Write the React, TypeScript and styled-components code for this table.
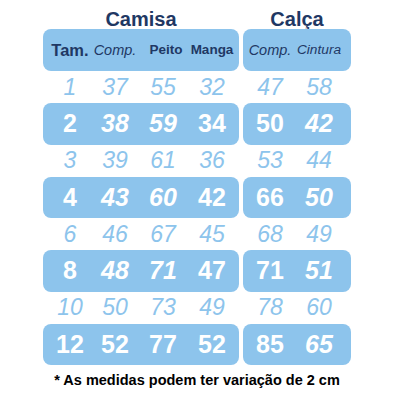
import React from "react";
import styled, { createGlobalStyle } from "styled-components";

const Global = createGlobalStyle`
  html, body { margin: 0; padding: 0; background: #ffffff; }
  body { font-family: "Liberation Sans", Arial, sans-serif; }
`;

const BLUE = "#8dc4ec";
const NAVY = "#1f3864";

const Page = styled.div`
  width: 400px;
  height: 400px;
  box-sizing: border-box;
  padding: 9px 0 0 43px;
  display: flex;
  flex-direction: column;
  align-items: flex-start;
`;

const Tables = styled.div`
  display: flex;
  gap: 4px;
`;

const Group = styled.div`
  display: flex;
  flex-direction: column;
`;

const Title = styled.div`
  height: 20px;
  line-height: 20px;
  text-align: center;
  font-size: 20px;
  font-weight: 700;
  color: ${NAVY};
`;

const Box = styled.div<{ $cols: string; $h: number }>`
  display: grid;
  grid-template-columns: ${(p) => p.$cols};
  padding-right: ${(p) => (p.$cols.split(" ").length === 4 ? 8 : 10)}px;
  height: ${(p) => p.$h}px;
  background: ${BLUE};
  border-radius: 8px;
  align-items: center;
`;

const Plain = styled.div<{ $cols: string }>`
  display: grid;
  grid-template-columns: ${(p) => p.$cols};
  padding-right: ${(p) => (p.$cols.split(" ").length === 4 ? 8 : 10)}px;
  height: 32px;
  align-items: center;
`;

const Cell = styled.div`
  display: flex;
  justify-content: center;
  white-space: nowrap;
`;

const HeadText = styled.span<{ $size: number; $bold?: boolean; $italic?: boolean }>`
  font-size: ${(p) => p.$size}px;
  font-weight: ${(p) => (p.$bold ? 700 : 400)};
  font-style: ${(p) => (p.$italic ? "italic" : "normal")};
  color: ${NAVY};
  line-height: 1;
`;

const LightNum = styled.span`
  font-size: 23px;
  font-style: italic;
  color: ${BLUE};
  line-height: 1;
`;

const BoldNum = styled.span<{ $italic?: boolean }>`
  font-size: 25px;
  font-weight: 700;
  font-style: ${(p) => (p.$italic ? "italic" : "normal")};
  color: #ffffff;
  line-height: 1;
`;

const Note = styled.div`
  width: 308px;
  margin-top: 7px;
  text-align: center;
  font-size: 14.5px;
  line-height: 17px;
  font-weight: 700;
  color: #000000;
  white-space: nowrap;
`;

const CAM_COLS = "54px 36px 60px 38px";
const CAL_COLS = "54px 44px";

type Row = { v: string[]; bold: boolean; it: boolean[] };

const camisa: Row[] = [
  { v: ["1", "37", "55", "32"], bold: false, it: [] },
  { v: ["2", "38", "59", "34"], bold: true, it: [false, true, true, false] },
  { v: ["3", "39", "61", "36"], bold: false, it: [] },
  { v: ["4", "43", "60", "42"], bold: true, it: [false, true, true, false] },
  { v: ["6", "46", "67", "45"], bold: false, it: [] },
  { v: ["8", "48", "71", "47"], bold: true, it: [false, true, true, false] },
  { v: ["10", "50", "73", "49"], bold: false, it: [] },
  { v: ["12", "52", "77", "52"], bold: true, it: [false, false, false, false] },
];

const calca: Row[] = [
  { v: ["47", "58"], bold: false, it: [] },
  { v: ["50", "42"], bold: true, it: [false, true] },
  { v: ["53", "44"], bold: false, it: [] },
  { v: ["66", "50"], bold: true, it: [false, true] },
  { v: ["68", "49"], bold: false, it: [] },
  { v: ["71", "51"], bold: true, it: [false, true] },
  { v: ["78", "60"], bold: false, it: [] },
  { v: ["85", "65"], bold: true, it: [false, true] },
];

function Rows({ rows, cols }: { rows: Row[]; cols: string }) {
  return (
    <>
      {rows.map((r, i) =>
        r.bold ? (
          <Box key={i} $cols={cols} $h={41.5}>
            {r.v.map((n, j) => (
              <Cell key={j}>
                <BoldNum $italic={r.it[j]}>{n}</BoldNum>
              </Cell>
            ))}
          </Box>
        ) : (
          <Plain key={i} $cols={cols}>
            {r.v.map((n, j) => (
              <Cell key={j}>
                <LightNum>{n}</LightNum>
              </Cell>
            ))}
          </Plain>
        )
      )}
    </>
  );
}

export default function App() {
  return (
    <>
      <Global />
      <Page>
        <Tables>
          <Group>
            <Title>Camisa</Title>
            <Box $cols={CAM_COLS} $h={42}>
              <Cell>
                <HeadText $size={16.5} $bold>Tam.</HeadText>
              </Cell>
              <Cell>
                <HeadText $size={14.5} $italic>Comp.</HeadText>
              </Cell>
              <Cell style={{ paddingLeft: 6 }}>
                <HeadText $size={13.5} $bold>Peito</HeadText>
              </Cell>
              <Cell>
                <HeadText $size={13.5} $bold>Manga</HeadText>
              </Cell>
            </Box>
            <Rows rows={camisa} cols={CAM_COLS} />
          </Group>
          <Group>
            <Title>Calça</Title>
            <Box $cols={CAL_COLS} $h={42}>
              <Cell>
                <HeadText $size={14.5} $italic>Comp.</HeadText>
              </Cell>
              <Cell>
                <HeadText $size={13.7} $italic>Cintura</HeadText>
              </Cell>
            </Box>
            <Rows rows={calca} cols={CAL_COLS} />
          </Group>
        </Tables>
        <Note>* As medidas podem ter variação de 2 cm</Note>
      </Page>
    </>
  );
}
